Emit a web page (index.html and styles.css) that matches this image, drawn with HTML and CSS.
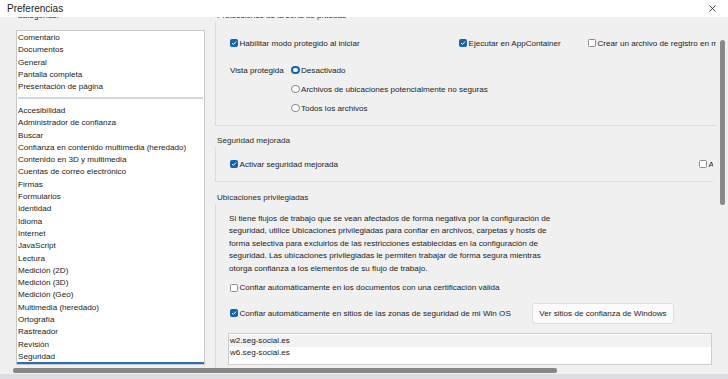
FILE: index.html
```html
<!DOCTYPE html>
<html>
	<head>
		<meta charset="utf-8" />
		<title>Preferencias</title>
		<link rel="stylesheet" href="styles.css">
	</head>
	<body>
		<div class="window">
			<div class="titlebar">
				<span class="title">Preferencias</span>
				<span class="close"><svg width="7" height="7" viewBox="0 0 7 7"><path d="M0.5 0.5 L6.5 6.5 M6.5 0.5 L0.5 6.5" stroke="#333" stroke-width="0.9" fill="none"/></svg></span>
			</div>
			<div class="main">
				<div class="sidebar">
					<div class="cap">Categorías:</div>
					<ul class="cats">
						<li>Comentario</li>
						<li>Documentos</li>
						<li>General</li>
						<li>Pantalla completa</li>
						<li>Presentación de página</li>
						<li class="sep"></li>
						<li>Accesibilidad</li>
						<li>Administrador de confianza</li>
						<li>Buscar</li>
						<li>Confianza en contenido multimedia (heredado)</li>
						<li>Contenido en 3D y multimedia</li>
						<li>Cuentas de correo electrónico</li>
						<li>Firmas</li>
						<li>Formularios</li>
						<li>Identidad</li>
						<li>Idioma</li>
						<li>Internet</li>
						<li>JavaScript</li>
						<li>Lectura</li>
						<li>Medición (2D)</li>
						<li>Medición (3D)</li>
						<li>Medición (Geo)</li>
						<li>Multimedia (heredado)</li>
						<li>Ortografía</li>
						<li>Rastreador</li>
						<li>Revisión</li>
						<li class="sel">Seguridad</li>
					</ul>
				</div>
				<div class="panel">
					<div class="pane">
						<!-- zona de pruebas -->
						<div class="ghead ghead_first">Protecciones de la zona de pruebas</div>
						<div class="gbox g1">
							<div class="row3">
								<label class="chk"><span class="cb on"><svg viewBox="0 0 6 6"><path d="M1 3.1 L2.4 4.4 L5 1.6" stroke="#fff" stroke-width="1" fill="none"/></svg></span>Habilitar modo protegido al iniciar</label>
								<label class="chk"><span class="cb on"><svg viewBox="0 0 6 6"><path d="M1 3.1 L2.4 4.4 L5 1.6" stroke="#fff" stroke-width="1" fill="none"/></svg></span>Ejecutar en AppContainer</label>
								<label class="chk"><span class="cb"></span>Crear un archivo de registro en modo protegido</label>
							</div>
							<div class="vista">
								<span class="vlabel">Vista protegida</span>
								<div class="radios">
									<label class="opt"><span class="rb on"></span>Desactivado</label>
									<label class="opt"><span class="rb"></span>Archivos de ubicaciones potencialmente no seguras</label>
									<label class="opt"><span class="rb"></span>Todos los archivos</label>
								</div>
							</div>
						</div>
						<!-- seguridad mejorada -->
						<div class="ghead">Seguridad mejorada</div>
						<div class="gbox g2">
							<div class="row2">
								<label class="chk"><span class="cb on"><svg viewBox="0 0 6 6"><path d="M1 3.1 L2.4 4.4 L5 1.6" stroke="#fff" stroke-width="1" fill="none"/></svg></span>Activar seguridad mejorada</label>
								<label class="chk"><span class="cb"></span>Archivos entre dominios</label>
							</div>
						</div>
						<!-- ubicaciones -->
						<div class="ghead">Ubicaciones privilegiadas</div>
						<div class="gbox g3">
							<p class="info">Si tiene flujos de trabajo que se vean afectados de forma negativa por la configuración de<br>seguridad, utilice Ubicaciones privilegiadas para confiar en archivos, carpetas y hosts de<br>forma selectiva para excluirlos de las restricciones establecidas en la configuración de<br>seguridad. Las ubicaciones privilegiadas le permiten trabajar de forma segura mientras<br>otorga confianza a los elementos de su flujo de trabajo.</p>
							<label class="chk c_docs"><span class="cb"></span>Confiar automáticamente en los documentos con una certificación válida</label>
							<div class="rowbtn">
								<label class="chk"><span class="cb on"><svg viewBox="0 0 6 6"><path d="M1 3.1 L2.4 4.4 L5 1.6" stroke="#fff" stroke-width="1" fill="none"/></svg></span>Confiar automáticamente en sitios de las zonas de seguridad de mi Win OS</label>
								<button class="btn">Ver sitios de confianza de Windows</button>
							</div>
							<ul class="hosts">
								<li class="cur">w2.seg-social.es</li>
								<li>w6.seg-social.es</li>
							</ul>
						</div>
					</div>
					<div class="vscroll"><div class="vthumb"></div></div>
				</div>
			</div>
			<div class="hscroll"><div class="hthumb"></div></div>
			<div class="bottom"></div>
		</div>
	</body>
</html>
```

FILE: styles.css
```css
*{
	margin:0;
	padding:0;
	box-sizing:border-box;
	list-style:none;
}
body{
	width:728px;
	height:379px;
	overflow:hidden;
	background:#f0f0f0;
	font-family:"Liberation Sans",Arial,sans-serif;
	font-size:8.1px;
	color:#1b1b1b;
}
.window{
	height:379px;
	display:flex;
	flex-direction:column;
}
.titlebar{
	height:17px;
	flex:none;
	background:#fff;
	display:flex;
	align-items:center;
	justify-content:space-between;
	padding:0 12px 0 7px;
}
	.title{font-size:10px;color:#1a1a1a;}
	.close{display:flex;}
.main{
	height:351px;
	flex:none;
	display:flex;
	overflow:hidden;
}

/* lista de categorias */
.sidebar{
	width:214px;
	flex:none;
	padding-left:16px;
}
	.cap{
		line-height:12px;
		margin-top:-7px;
		margin-bottom:8px;
		padding-left:1px;
		color:#2a2a2a;
	}
.cats{
	width:189px;
	height:335px;
	background:#fff;
	border:1px solid #c8c8c8;
	padding-top:1px;
	overflow:hidden;
}
	.cats li{
		height:12.3px;
		line-height:12.3px;
		padding-left:1px;
		white-space:nowrap;
	}
	.cats .sep{
		height:2px;
		margin:4px 1px 5.5px;
		background:#cfd8df;
	}
	.cats .sel{box-shadow:0 1px 0 #2a6fb0,inset 0 -1px 0 #2a6fb0;}

/* panel derecho */
.panel{
	flex:1;
	display:flex;
}
.pane{
	width:502px;
	flex:none;
	overflow:hidden;
	padding-left:1px;
}
.ghead{
	line-height:12px;
	padding-left:2px;
	color:#2a2a2a;
	white-space:nowrap;
}
	.ghead_first{margin-top:-7px;}
	.g2 + .ghead{margin-top:10px;}
	.g1 + .ghead{margin-top:9px;}
.gbox{
	width:520px;
	border-left:1px solid #dcdcdc;
	border-bottom:1px solid #dcdcdc;
	padding-left:14px;
}
	.g1{padding-top:14px;padding-bottom:7.5px;}
	.g2{width:498px;overflow:hidden;padding-top:10px;padding-bottom:10px;}
	.g3{width:498px;padding-top:8.7px;padding-bottom:10px;}
.row3{
	display:grid;
	grid-template-columns:229px 129px auto;
	height:14px;
	align-items:center;
	white-space:nowrap;
}
.row2{
	display:grid;
	grid-template-columns:469px auto;
	height:14px;
	align-items:center;
	white-space:nowrap;
}
.chk{
	display:flex;
	align-items:center;
	gap:1.5px;
	white-space:nowrap;
}
.cb{
	width:8px;
	height:8px;
	flex:none;
	display:flex;
	border:1px solid #8c8c8c;
	border-radius:1.5px;
	background:#fff;
}
	.cb.on{background:#1464b4;border-color:#1464b4;}
	.cb svg{width:6px;height:6px;}
.vista{
	display:grid;
	grid-template-columns:61px auto;
	margin-top:10.5px;
}
	.vlabel{line-height:19px;}
.opt{
	display:flex;
	align-items:center;
	gap:1.5px;
	height:19px;
	white-space:nowrap;
}
.rb{
	width:8.5px;
	height:8.5px;
	flex:none;
	border-radius:50%;
	border:1px solid #8c8c8c;
	background:#fafafa;
}
	.rb.on{border:2.5px solid #1464b4;background:#fff;}
.info{
	line-height:12.6px;
	margin-left:-1px;
	white-space:nowrap;
}
.c_docs{height:14px;margin-top:5.3px;}
.rowbtn{
	display:grid;
	grid-template-columns:302px auto;
	align-items:center;
	margin-top:8px;
}
.btn{
	width:142px;
	height:21px;
	background:#fbfbfb;
	border:1px solid #dedede;
	border-radius:3px;
	font:inherit;
	color:#1b1b1b;
}
.hosts{
	width:484px;
	height:32px;
	margin:9px 0 0 -2px;
	background:#fff;
	border:1px solid #cdcdcd;
	padding-top:1px;
}
	.hosts li{line-height:12.5px;padding-left:1px;}
	.hosts .cur{background:#f2f2f2;}

/* barras */
.vscroll{
	width:5px;
	flex:none;
	margin-left:4px;
	padding-top:23px;
}
	.vthumb{height:165px;background:#8a8a8a;border-radius:2.5px;}
.hscroll{
	height:6px;
	flex:none;
	padding:0 0 1px 13px;
}
	.hthumb{width:544px;height:5px;background:#878787;border-radius:2px;}
.bottom{
	height:5px;
	flex:none;
	background:#dcdde2;
}
```
